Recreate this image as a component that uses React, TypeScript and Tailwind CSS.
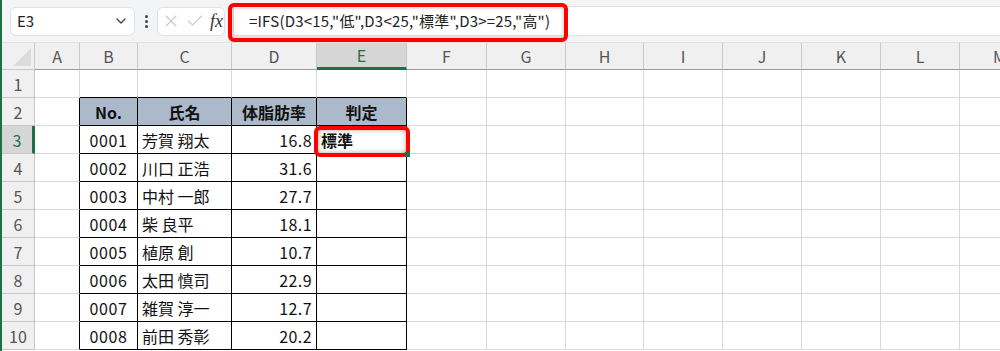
import React from 'react';
import { ChevronDown, X, Check } from 'lucide-react';

const COLS = ['A', 'B', 'C', 'D', 'E', 'F', 'G', 'H', 'I', 'J', 'K', 'L', 'M'];

const PEOPLE = [
  { no: '0001', name: '芳賀 翔太', rate: '16.8' },
  { no: '0002', name: '川口 正浩', rate: '31.6' },
  { no: '0003', name: '中村 一郎', rate: '27.7' },
  { no: '0004', name: '柴 良平', rate: '18.1' },
  { no: '0005', name: '植原 創', rate: '10.7' },
  { no: '0006', name: '太田 慎司', rate: '22.9' },
  { no: '0007', name: '雑賀 淳一', rate: '12.7' },
  { no: '0008', name: '前田 秀彰', rate: '20.2' },
];

const font = { fontFamily: '"Noto Sans CJK JP", "Noto Sans", sans-serif' };

// text + alignment for a cell, row r (1-based), column c (0 = A)
const cellContent = (r: number, c: number) => {
  if (r === 2) {
    const heads = ['', 'No.', '氏名', '体脂肪率', '判定'];
    return { text: heads[c] ?? '', cls: 'justify-center font-bold' };
  }
  if (r >= 3 && r <= 10) {
    const p = PEOPLE[r - 3];
    if (c === 1) return { text: p.no, cls: 'justify-center tracking-[0.6px]' };
    if (c === 2) return { text: p.name, cls: 'justify-start pl-[4px]' };
    if (c === 3) return { text: p.rate, cls: 'justify-end pr-[4px] tracking-[0.4px]' };
    if (c === 4 && r === 3) return { text: '標準', cls: 'justify-start pl-[4px] font-bold' };
  }
  return { text: '', cls: '' };
};

const App = () => {
  const rows = Array.from({ length: 10 }, (_, i) => i + 1);

  return (
    <div className="relative w-[1000px] h-[351px] overflow-hidden bg-white flex" style={font}>
      {/* window edge */}
      <div className="w-[2px] shrink-0 bg-[#1e7145]" />

      <div className="flex-1 flex flex-col min-w-0">
        {/* ── Formula toolbar ───────────────────────────── */}
        <div className="h-[43px] shrink-0 bg-[#f3f4f6] flex items-center pl-[8px] gap-[6px] border-b border-[#e3e3e3]">
          <div className="w-[125px] h-[29px] bg-white rounded-[6px] border border-[#e2e2e2] flex items-center justify-between pl-[6px] pr-[5px]">
            <span className="text-[15px] text-[#222]">E3</span>
            <ChevronDown className="h-4 w-4 text-[#444]" strokeWidth={2} />
          </div>
          <div className="w-[10px] flex flex-col items-center gap-[2px]">
            <span className="w-[3px] h-[3px] rounded-full bg-[#444]" />
            <span className="w-[3px] h-[3px] rounded-full bg-[#444]" />
            <span className="w-[3px] h-[3px] rounded-full bg-[#444]" />
          </div>
          <div className="w-[68px] h-[29px] bg-white rounded-[6px] border border-[#e2e2e2] flex items-center pl-[3px] gap-[4px]">
            <X className="h-[20px] w-[20px] text-[#c8c8c8]" strokeWidth={1.3} />
            <Check className="h-[20px] w-[20px] text-[#c8c8c8]" strokeWidth={1.3} />
            <span className="ml-[1px] text-[18px] italic text-[#333]" style={{ fontFamily: '"Liberation Serif", serif' }}>
              fx
            </span>
          </div>
          <div className="flex-1 h-[30px] bg-white border-y border-l border-[#e2e2e2] flex items-center pl-[15px] ml-[2px]">
            <span className="text-[15px] text-[#222] whitespace-nowrap tracking-[0.2px]">
              =IFS(D3&lt;15,"低",D3&lt;25,"標準",D3&gt;=25,"高")
            </span>
          </div>
        </div>

        {/* ── Sheet grid ───────────────────────────────── */}
        <div className="grid grid-cols-[33px_45px_58px_94px_85px_90px_80px_79px_78px_79px_79px_79px_79px_80px] auto-rows-[28px] grid-rows-[27px]">
          {/* corner */}
          <div className="bg-[#f0f0f0] border-r border-b border-[#c8c8c8] relative overflow-hidden">
            <div className="absolute right-[3px] bottom-[3px] w-0 h-0 border-l-[18px] border-l-transparent border-b-[18px] border-b-[#dcdcdc]" />
          </div>
          {COLS.map((col, c) => (
            <div
              key={col}
              className={
                c === 4
                  ? 'bg-[#d6d6d6] border-r border-[#c8c8c8] border-b-[3px] border-b-[#1e7145] flex items-center justify-center text-[16px] text-[#1e7145]'
                  : 'bg-[#f0f0f0] border-r border-b border-[#c8c8c8] border-b-[#9a9a9a] flex items-center justify-center text-[16px] text-[#555]'
              }
            >
              {col}
            </div>
          ))}

          {rows.map((r) => (
            <React.Fragment key={r}>
              <div
                className={
                  r === 3
                    ? 'bg-[#d6d6d6] border-b border-[#c8c8c8] border-r-[3px] border-r-[#1e7145] flex items-center justify-center text-[16px] text-[#1e7145]'
                    : 'bg-[#f0f0f0] border-b border-r border-[#c8c8c8] flex items-center justify-center text-[16px] text-[#555]'
                }
              >
                {r}
              </div>
              {COLS.map((col, c) => {
                const rightBlack = r >= 2 && r <= 10 && c <= 4;
                const bottomBlack = r >= 1 && r <= 10 && c >= 1 && c <= 4;
                const { text, cls } = cellContent(r, c);
                const head = r === 2 && c >= 1 && c <= 4;
                return (
                  <div
                    key={col}
                    className={[
                      'flex items-center border-r border-b text-[16px] text-[#111] whitespace-nowrap overflow-visible',
                      rightBlack ? 'border-r-black' : 'border-r-[#d9d9d9]',
                      bottomBlack ? 'border-b-black' : 'border-b-[#d9d9d9]',
                      head ? 'bg-[#acb9ca]' : '',
                      cls,
                    ].join(' ')}
                  >
                    {text}
                  </div>
                );
              })}
            </React.Fragment>
          ))}
        </div>
      </div>

      {/* ── Annotations ─────────────────────────────────── */}
      <div className="absolute left-[228px] top-[3px] w-[340px] h-[39px] rounded-[6px] border-[4px] border-[#ff0000] shadow-[inset_0_0_4px_rgba(0,0,0,0.25)]" />
      <div className="absolute left-[314px] top-[126px] w-[96px] h-[31px] rounded-[6px] border-[4px] border-[#ff0000] shadow-[inset_0_0_5px_rgba(0,0,0,0.35)]" />
      <div className="absolute left-[405px] top-[152px] w-[5px] h-[5px] bg-[#1e7145]" />
    </div>
  );
};

export default App;
